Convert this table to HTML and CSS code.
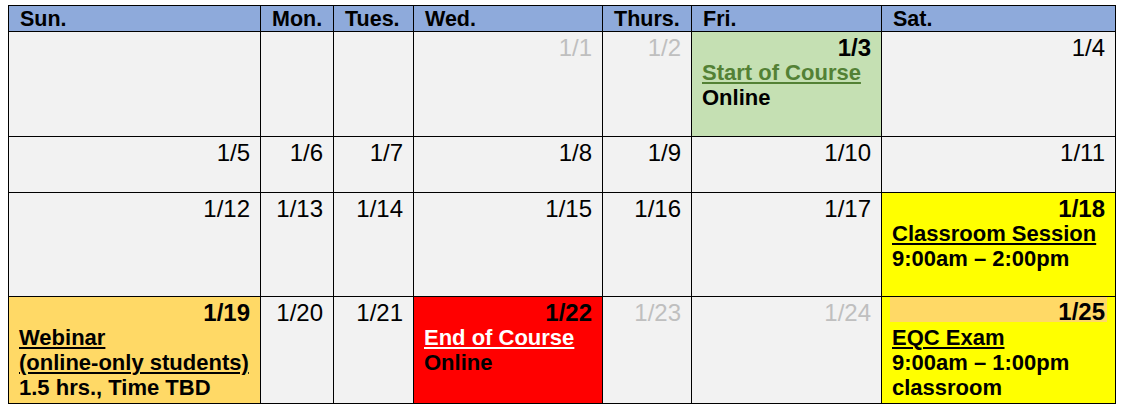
FILE: index.html
```html
<!DOCTYPE html>
<html lang="en">
<head>
<meta charset="utf-8">
<title>January Calendar</title>
<link rel="stylesheet" href="styles.css">
</head>
<body>
<table class="cal">
  <colgroup>
    <col class="c-sun"><col class="c-mon"><col class="c-tue"><col class="c-wed"><col class="c-thu"><col class="c-fri"><col class="c-sat">
  </colgroup>
  <thead>
    <tr class="head">
      <th>Sun.</th><th>Mon.</th><th>Tues.</th><th>Wed.</th><th>Thurs.</th><th>Fri.</th><th>Sat.</th>
    </tr>
  </thead>
  <tbody>
    <tr class="r1">
      <td></td>
      <td></td>
      <td></td>
      <td><div class="date muted">1/1</div></td>
      <td><div class="date muted">1/2</div></td>
      <td class="green">
        <div class="date strong">1/3</div>
        <div class="ev u green-text">Start of Course</div>
        <div class="ev">Online</div>
      </td>
      <td><div class="date">1/4</div></td>
    </tr>
    <tr class="r2">
      <td><div class="date">1/5</div></td>
      <td><div class="date">1/6</div></td>
      <td><div class="date">1/7</div></td>
      <td><div class="date">1/8</div></td>
      <td><div class="date">1/9</div></td>
      <td><div class="date">1/10</div></td>
      <td><div class="date">1/11</div></td>
    </tr>
    <tr class="r3">
      <td><div class="date">1/12</div></td>
      <td><div class="date">1/13</div></td>
      <td><div class="date">1/14</div></td>
      <td><div class="date">1/15</div></td>
      <td><div class="date">1/16</div></td>
      <td><div class="date">1/17</div></td>
      <td class="yellow">
        <div class="date strong">1/18</div>
        <div class="ev u">Classroom Session</div>
        <div class="ev">9:00am – 2:00pm</div>
      </td>
    </tr>
    <tr class="r4">
      <td class="orange">
        <div class="date strong">1/19</div>
        <div class="ev u">Webinar</div>
        <div class="ev u">(online-only students)</div>
        <div class="ev">1.5 hrs., Time TBD</div>
      </td>
      <td><div class="date">1/20</div></td>
      <td><div class="date">1/21</div></td>
      <td class="red">
        <div class="date strong">1/22</div>
        <div class="ev u white-text">End of Course</div>
        <div class="ev">Online</div>
      </td>
      <td><div class="date muted">1/23</div></td>
      <td><div class="date muted">1/24</div></td>
      <td class="yellow">
        <div class="date strong shade">1/25</div>
        <div class="ev u">EQC Exam</div>
        <div class="ev">9:00am – 1:00pm</div>
        <div class="ev">classroom</div>
      </td>
    </tr>
  </tbody>
</table>
</body>
</html>
```

FILE: styles.css
```css
html, body {
  margin: 0;
  background: #ffffff;
}

body {
  padding: 5px 8px;
  font-family: "Liberation Sans", Arial, sans-serif;
  color: #000000;
}

.cal {
  border-collapse: collapse;
  table-layout: fixed;
  width: 1107px;
}

.c-sun { width: 252px; }
.c-mon { width: 73px; }
.c-tue { width: 80px; }
.c-wed { width: 189px; }
.c-thu { width: 89px; }
.c-fri { width: 190px; }
.c-sat { width: 234px; }

.cal th,
.cal td {
  border: 1px solid #000000;
  vertical-align: top;
  padding: 0 8px;
  background: #f2f2f2;
  overflow: hidden;
}

.cal th {
  background: #8eaadb;
  text-align: left;
  font-size: 21.5px;
  line-height: 24px;
  font-weight: bold;
  padding: 1px 10px 0 11px;
  white-space: nowrap;
}

.head { height: 26px; }
.r1 { height: 105px; }
.r2 { height: 56px; }
.r3 { height: 104px; }
.r4 { height: 107px; }

.date {
  text-align: right;
  font-size: 24px;
  line-height: 24px;
  padding: 4px 2px 0 2px;
}

.date.strong { font-weight: bold; }
.date.muted { color: #bfbfbf; }

.date.shade {
  background: #ffd966;
  padding-top: 5px;
  line-height: 20px;
  margin-bottom: 3px;
}

.ev {
  font-size: 22px;
  line-height: 25px;
  font-weight: bold;
  padding: 0 2px;
  white-space: nowrap;
}

.u {
  text-decoration: underline;
  text-decoration-thickness: 2px;
  text-underline-offset: 2px;
}

.cal td.green { background: #c5e0b3; }
.cal td.yellow { background: #ffff00; }
.cal td.orange { background: #ffd966; }
.cal td.red { background: #ff0000; }

.green-text { color: #538135; }
.white-text { color: #ffffff; }
```
